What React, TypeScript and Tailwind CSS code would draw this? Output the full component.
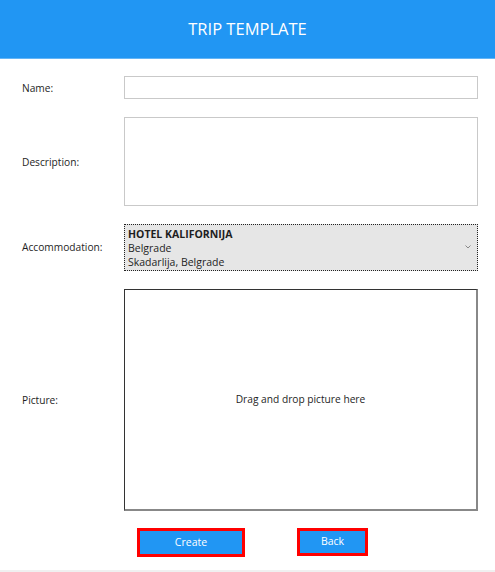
export default function App() {
  const labelFont = { fontFamily: '"Open Sans", "Noto Sans", sans-serif' };
  return (
    <div
      className="w-[495px] h-[572px] bg-white flex flex-col text-[10.2px] text-[#1e1e1e]"
      style={labelFont}
    >
      <div className="h-[59px] bg-[#2196f3] border-b border-[#64b5f6] flex items-center justify-center">
        <span className="text-white text-[16.5px]">TRIP TEMPLATE</span>
      </div>

      <div className="grid grid-cols-[102px_354px] pl-[22px] pt-[17px] gap-y-[18px]">
        <label className="flex items-center pt-[2px]">Name:</label>
        <div className="h-[23px] border border-[#c9c9c9]" />

        <label className="flex items-center pt-[2px]">Description:</label>
        <div className="h-[89px] border border-[#c9c9c9]" />

        <label className="flex items-center pt-[1px]">Accommodation:</label>
        <div className="h-[47px] bg-[#e6e6e6] border border-dotted border-[#222] flex items-center pl-[3px] pr-[6px]">
          <div className="flex-1 flex flex-col leading-[14px] text-[10.5px]">
            <span className="font-bold">HOTEL KALIFORNIJA</span>
            <span>Belgrade</span>
            <span>Skadarlija, Belgrade</span>
          </div>
          <svg width="6" height="4" viewBox="0 0 6 4" className="mb-[2px]">
            <path d="M0.5 0.5 L3 3 L5.5 0.5" fill="none" stroke="#888" strokeWidth="1" />
          </svg>
        </div>

        <label className="flex items-center pt-[1px]">Picture:</label>
        <div className="h-[222px] border border-[#333] border-r-2 border-b-2 border-r-[#888] border-b-[#888] flex items-center justify-center">
          <span>Drag and drop picture here</span>
        </div>
      </div>

      <div className="flex pl-[137px] pt-[17px] gap-[52px]">
        <button className="w-[108px] h-[29px] bg-[#2196f3] border-[3px] border-[#ff0000] text-white text-[10.5px]">
          Create
        </button>
        <button className="w-[71px] h-[28px] bg-[#2196f3] border-[3px] border-[#ff0000] text-white text-[10.5px]">
          Back
        </button>
      </div>

      <div className="mt-auto h-[2px] bg-[#f0f0f0]" />
    </div>
  );
}
